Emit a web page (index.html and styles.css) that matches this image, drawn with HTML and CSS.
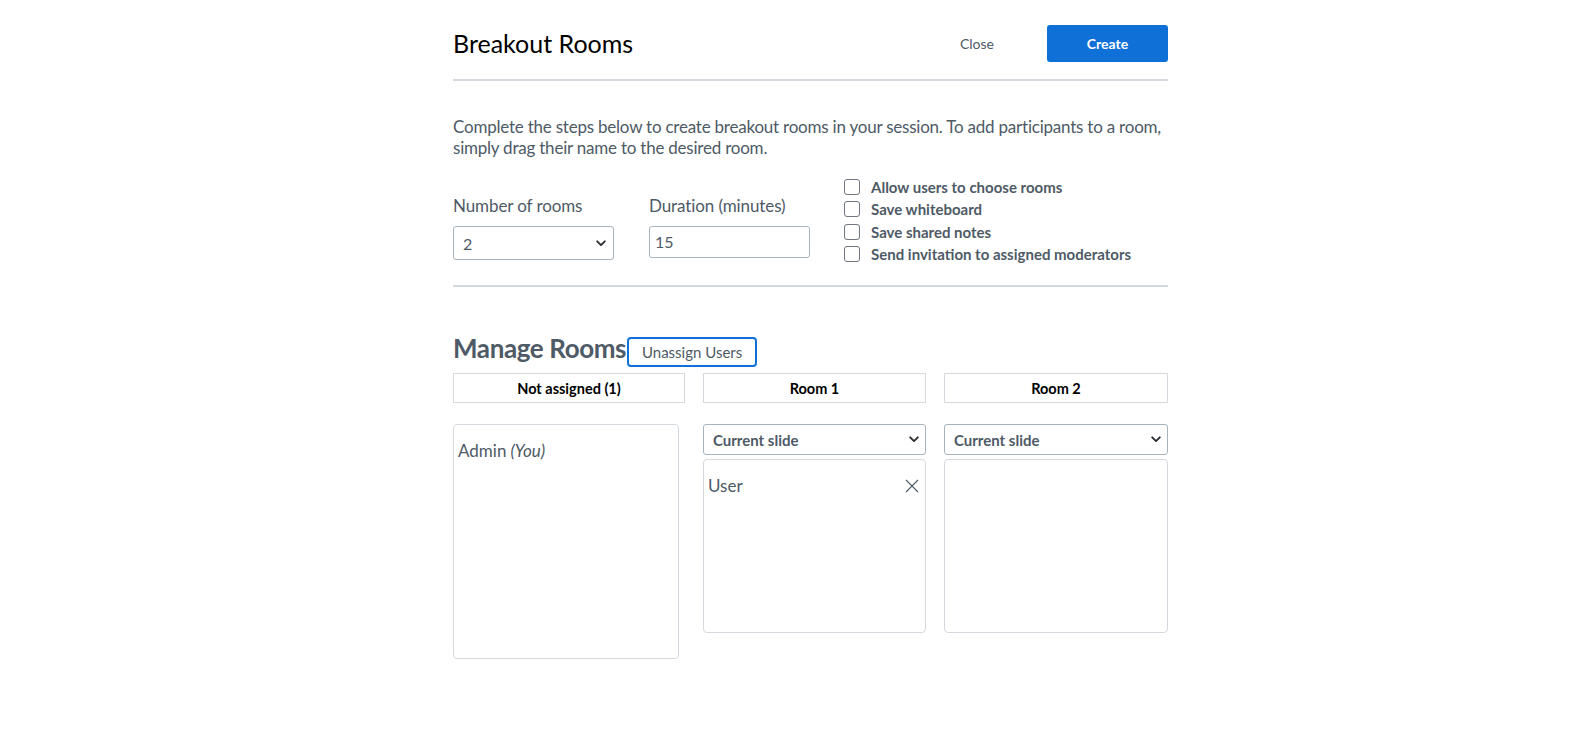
FILE: index.html
```html
<!DOCTYPE html>
<html lang="en">
<head>
<meta charset="utf-8">
<title>Breakout Rooms</title>
<link rel="stylesheet" href="styles.css">
</head>
<body>
<div class="modal">
  <header class="modal-header">
    <h1 class="title">Breakout Rooms</h1>
    <div class="actions">
      <button class="btn-close" type="button">Close</button>
      <button class="btn-create" type="button">Create</button>
    </div>
  </header>

  <section class="setup">
    <p class="desc">Complete the steps below to create breakout rooms in your session. To add participants to a room, simply drag their name to the desired room.</p>
    <div class="settings">
      <div class="field">
        <span class="field-label">Number of rooms</span>
        <div class="select select-rooms">
          <span>2</span>
          <svg class="chev" width="10" height="7" viewBox="0 0 10 7"><path d="M1.2 1.3 L5 5.1 L8.8 1.3" fill="none" stroke="#2b2f33" stroke-width="1.9" stroke-linecap="round" stroke-linejoin="round"/></svg>
        </div>
      </div>
      <div class="field">
        <span class="field-label">Duration (minutes)</span>
        <div class="input">15</div>
      </div>
      <ul class="checks">
        <li><span class="box"></span>Allow users to choose rooms</li>
        <li><span class="box"></span>Save whiteboard</li>
        <li><span class="box"></span>Save shared notes</li>
        <li><span class="box"></span>Send invitation to assigned moderators</li>
      </ul>
    </div>
  </section>

  <section class="manage">
    <div class="manage-head">
      <h2 class="manage-title">Manage Rooms</h2>
      <button class="btn-unassign" type="button">Unassign Users</button>
    </div>
    <div class="rooms">
      <div class="room">
        <div class="room-name">Not assigned (1)</div>
        <div class="room-list list-free">
          <div class="user">Admin <i>(You)</i></div>
        </div>
      </div>
      <div class="room">
        <div class="room-name">Room 1</div>
        <div class="select select-slide">
          <span>Current slide</span>
          <svg class="chev" width="10" height="7" viewBox="0 0 10 7"><path d="M1.2 1.3 L5 5.1 L8.8 1.3" fill="none" stroke="#2b2f33" stroke-width="1.9" stroke-linecap="round" stroke-linejoin="round"/></svg>
        </div>
        <div class="room-list">
          <div class="user">User
            <svg class="remove" width="14" height="14" viewBox="0 0 14 14"><path d="M1 1 L13 13 M13 1 L1 13" stroke="#4e5a66" stroke-width="1.1" fill="none"/></svg>
          </div>
        </div>
      </div>
      <div class="room">
        <div class="room-name">Room 2</div>
        <div class="select select-slide">
          <span>Current slide</span>
          <svg class="chev" width="10" height="7" viewBox="0 0 10 7"><path d="M1.2 1.3 L5 5.1 L8.8 1.3" fill="none" stroke="#2b2f33" stroke-width="1.9" stroke-linecap="round" stroke-linejoin="round"/></svg>
        </div>
        <div class="room-list"></div>
      </div>
    </div>
  </section>
</div>
</body>
</html>
```

FILE: styles.css
```css
* {
  box-sizing: border-box;
}

body {
  margin: 0;
  background: #fff;
  font-family: Lato, "Liberation Sans", sans-serif;
  color: #4e5a66;
}

.modal {
  width: 749px;
  margin: 0 auto;
  padding: 25px 0 0 34px;
}

/* header */
.modal-header {
  display: flex;
  align-items: center;
  justify-content: space-between;
  padding-bottom: 17px;
  border-bottom: 2px solid #d4d9df;
}

.title {
  margin: 0;
  font-size: 25px;
  font-weight: 400;
  color: #000;
  line-height: 37px;
}

.actions {
  display: flex;
  align-items: center;
}

button {
  font-family: inherit;
  cursor: pointer;
}

.btn-close {
  border: 0;
  background: none;
  color: #4e5a66;
  font-size: 14px;
  padding: 0;
  margin-right: 53px;
}

.btn-create {
  width: 121px;
  height: 37px;
  border: 0;
  border-radius: 3px;
  background: #0f70d7;
  color: #fff;
  font-size: 14px;
  font-weight: 700;
}

/* setup */
.desc {
  margin: 35px 0 0;
  font-size: 17px;
  line-height: 21px;
  letter-spacing: -0.22px;
}

.settings {
  display: flex;
  align-items: flex-start;
  margin-top: 18px;
  padding-bottom: 20px;
  border-bottom: 2px solid #d4d9df;
}

.field {
  display: flex;
  flex-direction: column;
  width: 161px;
  margin-top: 19px;
  margin-right: 35px;
}

.field + .field {
  margin-right: 34px;
}

.field-label {
  font-size: 17px;
  line-height: 21px;
  margin-bottom: 10px;
  letter-spacing: -0.1px;
}

.select {
  display: flex;
  align-items: center;
  justify-content: space-between;
  border: 1px solid #a7b3bd;
  border-radius: 3px;
  background: #fff;
}

.select-rooms {
  height: 34px;
  padding: 0 7px 0 9px;
  font-size: 16px;
}

.input {
  height: 32px;
  border: 1px solid #a7b3bd;
  border-radius: 3px;
  padding: 0 5px;
  font-size: 16px;
  line-height: 30px;
}

.checks {
  list-style: none;
  margin: 0;
  padding: 0;
  font-size: 15px;
  font-weight: 700;
}

.checks li {
  display: flex;
  align-items: center;
  height: 22.3px;
}

.box {
  width: 16px;
  height: 16px;
  border: 1px solid #6f7680;
  border-radius: 3px;
  margin-right: 11px;
  flex: none;
}

/* manage rooms */
.manage-head {
  display: flex;
  align-items: flex-end;
  margin-top: 46px;
}

.manage-title {
  margin: 0 0 4px;
  font-size: 26px;
  line-height: 30px;
  font-weight: 700;
  letter-spacing: -0.4px;
}

.btn-unassign {
  height: 30px;
  width: 130px;
  padding: 0;
  margin-left: 1px;
  border: 2px solid #0f70d7;
  border-radius: 4px;
  background: #fff;
  color: #4e5a66;
  font-size: 15px;
}

.rooms {
  display: grid;
  grid-template-columns: 232px 223px 224px;
  column-gap: 18px;
  margin-top: 6px;
}

.room {
  display: flex;
  flex-direction: column;
}

.room-name {
  height: 30px;
  border: 1px solid #d4d9df;
  display: flex;
  align-items: center;
  justify-content: center;
  font-size: 14.5px;
  font-weight: 700;
  color: #000;
}

.room-list {
  border: 1px solid #d4d9df;
  border-radius: 4px;
  height: 174px;
  margin-top: 4px;
  padding: 15px 6px 0 4px;
}

.list-free {
  width: 226px;
  height: 235px;
  margin-top: 21px;
}

.select-slide {
  height: 31px;
  margin-top: 21px;
  padding: 0 6px 0 9px;
  font-size: 15px;
  font-weight: 700;
}

.user {
  display: flex;
  align-items: center;
  justify-content: space-between;
  font-size: 17px;
  line-height: 21px;
}

.user i {
  margin-left: 4px;
  margin-right: auto;
}

.remove {
  width: 14px;
  height: 14px;
}
```
